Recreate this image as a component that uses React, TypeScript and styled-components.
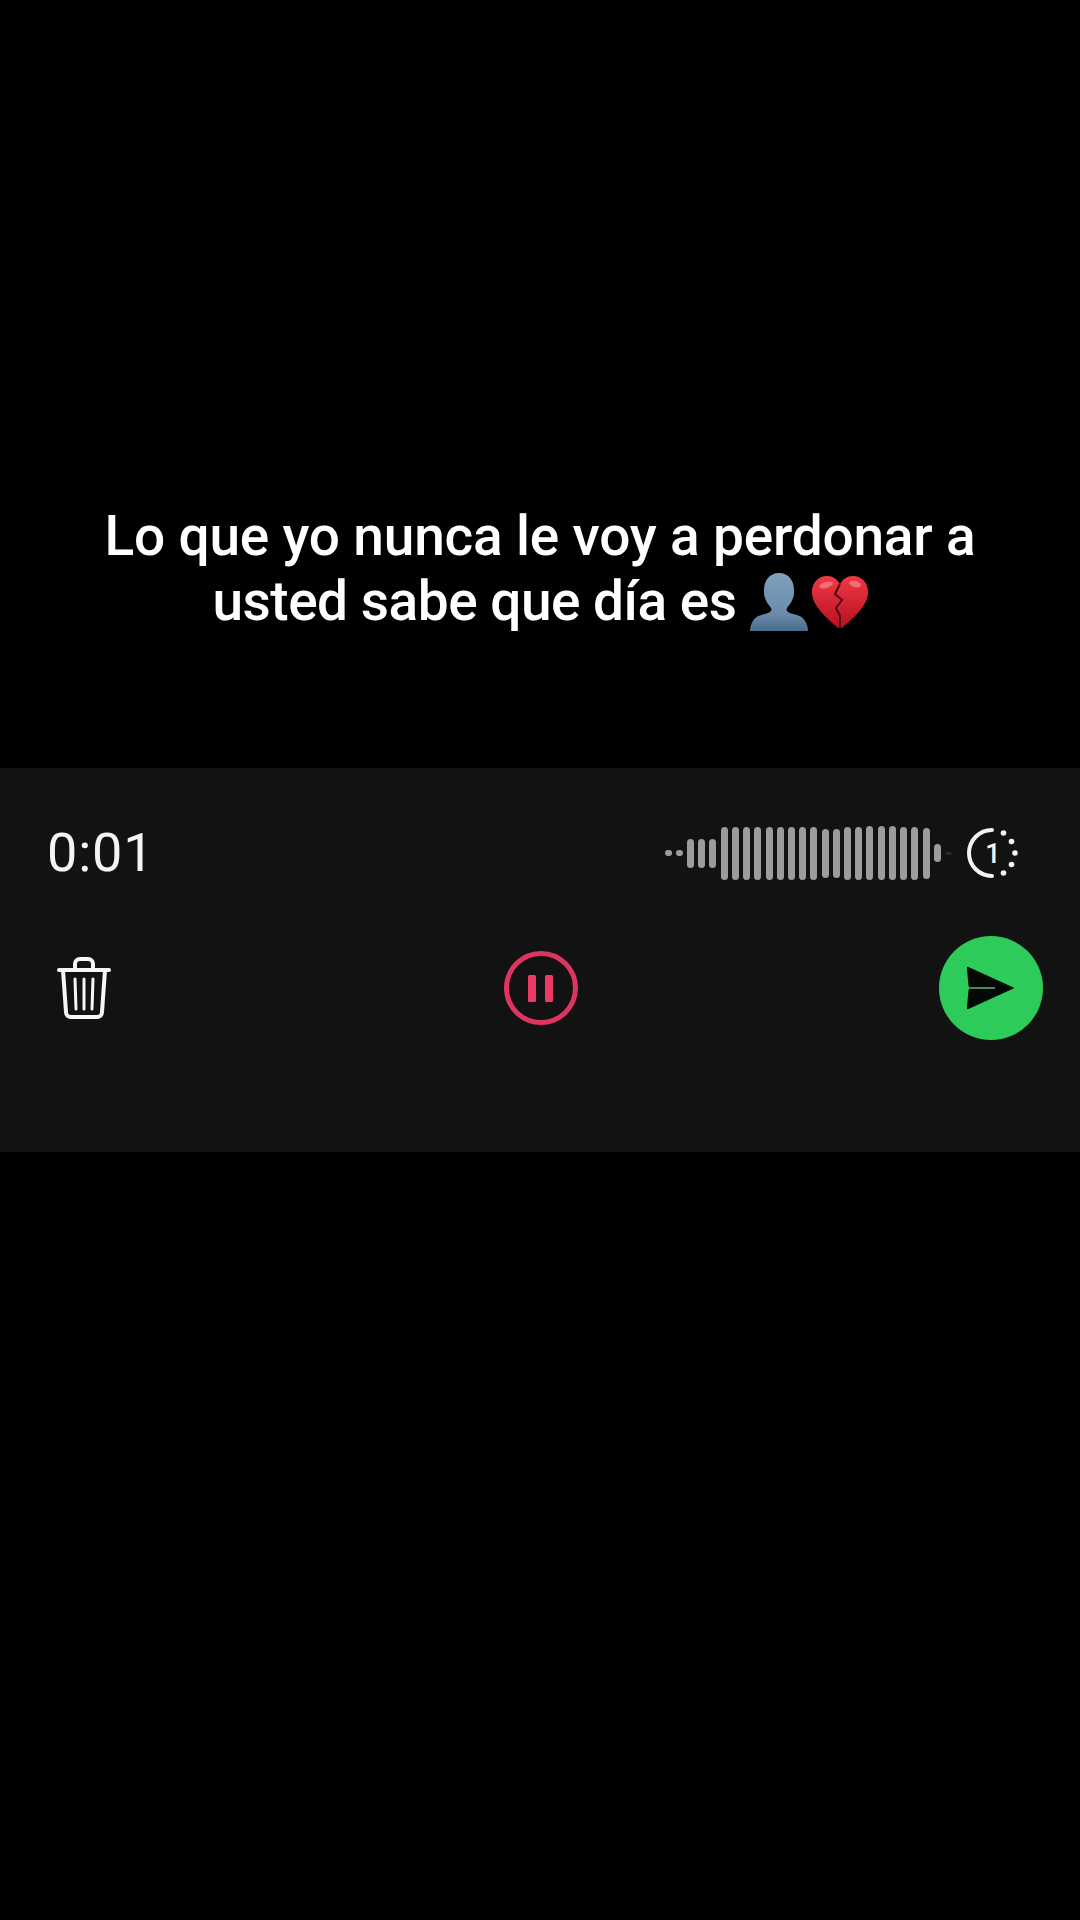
import React from "react";
import styled, { createGlobalStyle } from "styled-components";

const Global = createGlobalStyle`
  html, body { margin: 0; padding: 0; background: #000; }
  #root { width: 1080px; height: 1920px; overflow: hidden; }
`;

const Page = styled.main`
  width: 1080px;
  height: 1920px;
  background: #000;
  display: flex;
  flex-direction: column;
  font-family: Roboto, "Liberation Sans", sans-serif;
`;

const Caption = styled.h1`
  margin: 0;
  height: 768px;
  box-sizing: border-box;
  padding-top: 504px;
  color: #fff;
  font-size: 55px;
  font-weight: 500;
  line-height: 65px;
  text-align: center;
`;

const CaptionLine = styled.div<{ $spacing: number }>`
  display: flex;
  justify-content: center;
  align-items: center;
  gap: 13px;
  height: 65px;
  letter-spacing: ${(p) => p.$spacing}px;
`;

const EmojiGroup = styled.span`
  display: inline-flex;
  align-items: center;
  gap: 4px;
`;

const Panel = styled.section`
  height: 384px;
  background: #121212;
  display: flex;
  flex-direction: column;
  box-sizing: border-box;
  padding-top: 52px;
`;

const TopRow = styled.div`
  height: 66px;
  display: flex;
  align-items: center;
  justify-content: space-between;
  padding: 0 60px 0 47px;
`;

const Time = styled.span`
  color: #f4f4f4;
  font-size: 54px;
  font-weight: 400;
  letter-spacing: 0.8px;
  line-height: 66px;
`;

const Meter = styled.div`
  display: flex;
  align-items: center;
  gap: 12px;
`;

const Wave = styled.div`
  display: flex;
  align-items: center;
  gap: 4.23px;
`;

const Bar = styled.span<{ $h: number }>`
  width: 7px;
  height: ${(p) => p.$h}px;
  border-radius: 3.5px;
  background: #9c9c9c;
`;

const FaintBar = styled(Bar)`
  background: #2a2a2a;
`;

const ControlRow = styled.div`
  margin-top: 50px;
  display: grid;
  grid-template-columns: 1fr auto 1fr;
  align-items: center;
  padding: 0 37px 0 39px;
`;

const SendButton = styled.button`
  justify-self: end;
  width: 104px;
  height: 104px;
  padding: 0;
  border: 0;
  border-radius: 50%;
  background: #2dcc5a;
  display: flex;
  align-items: center;
  justify-content: center;
`;

const IconButton = styled.button`
  padding: 0;
  border: 0;
  background: none;
  display: flex;
  justify-self: start;
`;

const TrashButton = styled(IconButton)`
  margin-left: 18px;
`;

const TimerDigit = styled.text`
  font-family: Roboto, sans-serif;
  font-size: 27px;
  font-weight: 500;
  fill: #f4f4f4;
`;

const bars = [6, 6, 29, 29, 29, 53, 53, 53, 53, 53, 53, 53, 53, 53, 49, 49, 53, 53, 54, 54, 54, 53, 53, 51, 18];

const Bust = () => (
  <svg width="58" height="58" viewBox="0 0 58 58" aria-hidden="true">
    <defs>
      <linearGradient id="bust" x1="0" y1="0" x2="0" y2="1">
        <stop offset="0" stopColor="#7f9fbd" />
        <stop offset="0.7" stopColor="#6b8cab" />
        <stop offset="1" stopColor="#4a6c8d" />
      </linearGradient>
    </defs>
    <path
      fill="url(#bust)"
      d="M29 0c10 0 15 8 15 17 0 3 0 6-1 8-1 4-4 7-6 10-1 2 0 4 3 5 5 2 12 2 15 8 2 3 3 6 3 10H0c0-4 1-7 3-10 3-6 10-6 15-8 3-1 4-3 3-5-2-3-5-6-6-10-1-2-1-5-1-8C14 8 19 0 29 0z"
    />
  </svg>
);

const BrokenHeart = () => (
  <svg width="56" height="52" viewBox="0 0 56 52" aria-hidden="true">
    <defs>
      <linearGradient id="heart" x1="0" y1="0" x2="0" y2="1">
        <stop offset="0" stopColor="#ee3a44" />
        <stop offset="1" stopColor="#b80f22" />
      </linearGradient>
    </defs>
    <path
      fill="url(#heart)"
      d="M15 0c6 0 10 3 13 8 3-5 7-8 13-8 9 0 15 7 15 16 0 14-15 26-26 36h-4C15 42 0 30 0 16 0 7 6 0 15 0z"
    />
    <path fill="none" stroke="#4d0710" strokeWidth="2" d="M28 8l-5 10 7 6-6 8 4 8 0 12" />
    <ellipse cx="14" cy="9" rx="7" ry="3" fill="#f9a0a3" opacity="0.55" transform="rotate(-15 14 9)" />
    <ellipse cx="43" cy="8" rx="6" ry="3" fill="#f9a0a3" opacity="0.55" transform="rotate(15 43 8)" />
  </svg>
);

const TimerIcon = () => (
  <svg width="56" height="56" viewBox="0 0 56 56" aria-hidden="true">
    <path d="M28 5A23 23 0 0 0 28 51" fill="none" stroke="#f4f4f4" strokeWidth="4" strokeLinecap="round" />
    {[[39.5, 8], [47.5, 16.5], [51, 28], [47.5, 39.5], [39.5, 48]].map(([x, y]) => (
      <circle key={x + "-" + y} cx={x} cy={y} r="2.8" fill="#f4f4f4" />
    ))}
    <TimerDigit x="29" y="38" textAnchor="middle">1</TimerDigit>
  </svg>
);

const TrashIcon = () => (
  <svg width="54" height="62" viewBox="0 0 54 62" fill="none" stroke="#f6f6f6" strokeWidth="4" strokeLinecap="round" strokeLinejoin="round" aria-hidden="true">
    <path d="M2 13h50" />
    <path d="M18 12V7c0-3 2-5 5-5h8c3 0 5 2 5 5v5" />
    <path d="M6 13l3 42c0 3 2 5 5 5h26c3 0 5-2 5-5l3-42" />
    <path d="M18 22l1 30M27 22v30M36 22l-1 30" strokeWidth="3" />
  </svg>
);

const PauseIcon = () => (
  <svg width="74" height="74" viewBox="0 0 74 74" aria-hidden="true">
    <circle cx="37" cy="37" r="34.5" fill="none" stroke="#dd3560" strokeWidth="5" />
    <rect x="24" y="24" width="8" height="27" rx="1.5" fill="#ee3a62" />
    <rect x="41" y="24" width="8" height="27" rx="1.5" fill="#ee3a62" />
  </svg>
);

const SendIcon = () => (
  <svg width="50" height="44" viewBox="0 0 50 44" aria-hidden="true">
    <path d="M2.5 1L48.5 22 2.5 43c-1 .4-1.6-.2-1.6-1L2.5 24 4 22 2.5 20 .9 2c0-1 .6-1.4 1.6-1z" fill="#030a05" />
    <path d="M4 22h25" stroke="#6fb884" strokeWidth="1.8" opacity="0.8" />
  </svg>
);

export default function App() {
  return (
    <Page>
      <Global />
      <Caption>
        <CaptionLine $spacing={-0.2}>Lo que yo nunca le voy a perdonar a</CaptionLine>
        <CaptionLine $spacing={-0.5}>
          usted sabe que día es
          <EmojiGroup>
            <Bust />
            <BrokenHeart />
          </EmojiGroup>
        </CaptionLine>
      </Caption>
      <Panel>
        <TopRow>
          <Time>0:01</Time>
          <Meter>
            <Wave>
              {bars.map((h, i) => (
                <Bar key={i} $h={h} />
              ))}
              <FaintBar $h={3} />
            </Wave>
            <TimerIcon />
          </Meter>
        </TopRow>
        <ControlRow>
          <TrashButton aria-label="Eliminar">
            <TrashIcon />
          </TrashButton>
          <IconButton aria-label="Pausar">
            <PauseIcon />
          </IconButton>
          <SendButton aria-label="Enviar">
            <SendIcon />
          </SendButton>
        </ControlRow>
      </Panel>
    </Page>
  );
}
